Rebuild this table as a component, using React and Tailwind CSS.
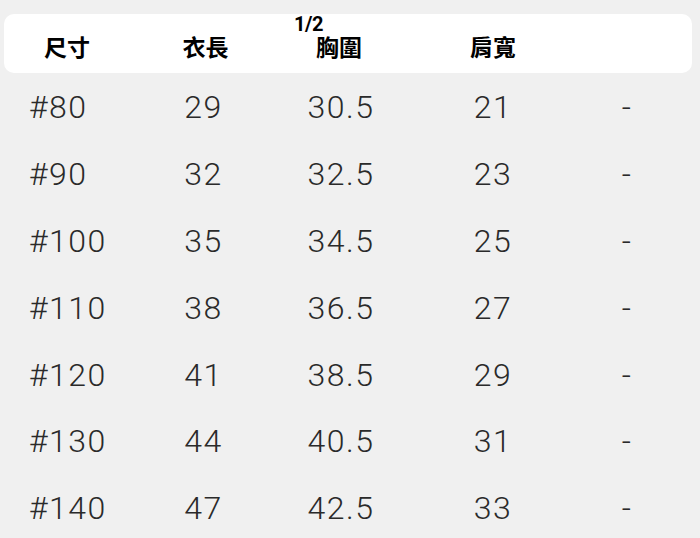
const rows = [
  ["#80", "29", "30.5", "21", "-"],
  ["#90", "32", "32.5", "23", "-"],
  ["#100", "35", "34.5", "25", "-"],
  ["#110", "38", "36.5", "27", "-"],
  ["#120", "41", "38.5", "29", "-"],
  ["#130", "44", "40.5", "31", "-"],
  ["#140", "47", "42.5", "33", "-"],
];

const cols = ["w-[135px]", "w-[137px]", "w-[138px]", "w-[166px]", "w-[102px]"];

export default function App() {
  return (
    <div className="w-[700px] h-[538px] overflow-hidden bg-[#f0f0f0] pt-[14px]">
      {/* header */}
      <div className="mx-[4px] w-[688px] h-[59px] rounded-[10px] bg-white flex items-center pt-[5px] text-black font-bold text-[23px] font-['Noto_Sans_CJK_TC','Noto_Sans_CJK_SC',sans-serif]">
        <div className={`${cols[0]} text-center pr-[9px]`}>尺寸</div>
        <div className={`${cols[1]} text-center pr-[4px]`}>衣長</div>
        <div className={`${cols[2]} text-center pr-[12px]`}>
          <span className="relative inline-block">
            <span className="absolute left-[-22px] top-[-15px] text-[20px] leading-none tracking-[-0.5px] font-['Roboto',sans-serif] font-bold">
              1/2
            </span>
            胸圍
          </span>
        </div>
        <div className={`${cols[3]} text-center pr-[8px]`}>肩寬</div>
        <div className={cols[4]} />
      </div>

      {/* rows */}
      <div className="flex flex-col pt-[1px] font-['Roboto',sans-serif] font-light text-[32px] text-[#2a2a2a] tracking-[1.5px]">
        {rows.map((r) => (
          <div key={r[0]} className="h-[66.8px] flex items-center">
            <div className={`${cols[0]} pl-[29px]`}>{r[0]}</div>
            <div className={`${cols[1]} text-center`}>{r[1]}</div>
            <div className={`${cols[2]} text-center`}>{r[2]}</div>
            <div className={`${cols[3]} text-center`}>{r[3]}</div>
            <div className={`${cols[4]} text-center`}>{r[4]}</div>
          </div>
        ))}
      </div>
    </div>
  );
}
